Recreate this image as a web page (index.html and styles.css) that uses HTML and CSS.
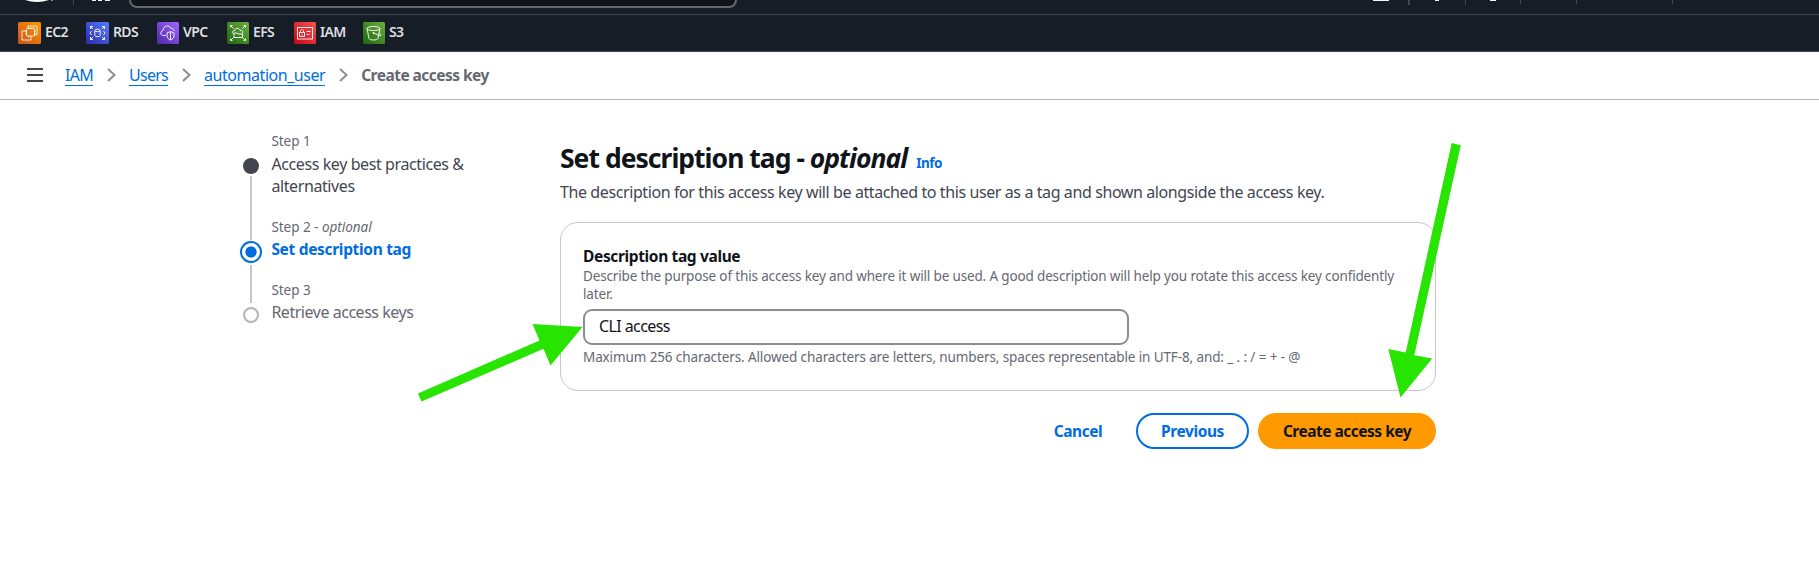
FILE: index.html
```html
<!DOCTYPE html>
<html lang="en">
<head>
<meta charset="utf-8">
<title>Create access key | IAM</title>
<link rel="stylesheet" href="styles.css">
</head>
<body>
<header class="topnav">
  <svg class="nav-left" width="129" height="14" viewBox="0 0 129 14">
    <path d="M25 0Q37 4 49 0Z" fill="#fff"/><path d="M51 0h2v1h-2z" fill="#8c8c94"/>
    <path d="M73 0h1v5h-1z" fill="#424650"/>
    <path d="M92 0h4v1h-4zM98 0h4v1h-4zM105 0h5v1h-5z" fill="#f3f3f7"/>
  </svg>
  <div class="search"></div>
  <svg class="nav-right" width="479" height="14" viewBox="0 0 479 14">
    <path d="M33 0h16v1H33zM95 0h4v1h-4zM150 0h6v1h-6z" fill="#f3f3f7"/>
    <path d="M68 0h2v5h-2zM125 0h1v5h-1zM180 0h1v4h-1zM236 0h1v4h-1zM332 0h1v4h-1z" fill="#424650"/>
  </svg>
</header>
<nav class="favorites">
  <a class="fav"><svg width="23" height="22" viewBox="0 0 23 22"><defs><linearGradient id="go" x1="0" y1="1" x2="1" y2="0"><stop stop-color="#c8511b"/><stop offset="1" stop-color="#f90"/></linearGradient></defs><rect width="23" height="22" rx="1.5" fill="url(#go)"/><g fill="none" stroke="#fff" stroke-width=".9"><rect x="8.5" y="6.500" width="8" height="7.500" rx="1"/><path d="M10.500 6.500V5M13 6.500V5M15.500 6.500V5M16.500 9H18M16.500 11.500H18M7 9h1.500M7 11.500h1.500M10.500 14v1.500M13 14v1.500M8 9H4v9h9v-3M10 6V4h9v9h-2.500" stroke-width=".8"/></g></svg><span>EC2</span></a>
  <a class="fav"><svg width="23" height="22" viewBox="0 0 23 22"><defs><linearGradient id="gb" x1="0" y1="1" x2="1" y2="0"><stop stop-color="#2e27ad"/><stop offset="1" stop-color="#527fff"/></linearGradient></defs><rect width="23" height="22" rx="1.500" fill="url(#gb)"/><g fill="none" stroke="#fff" stroke-width=".9"><path d="M4.500 7V4.500H7M4.500 4.500L7 7M16 4.500h2.500V7M18.500 4.500L16 7M4.500 15v2.500H7M4.500 17.500L7 15M16 17.500h2.500V15M18.500 17.500L16 15M5.500 9L4 11l1.500 2M17.500 9L19 11l-1.500 2"/><ellipse cx="11.500" cy="8.500" rx="2.700" ry="1.200"/><path d="M8.800 8.500v5c0 1.600 5.400 1.600 5.400 0v-5"/></g></svg><span>RDS</span></a>
  <a class="fav"><svg width="22" height="22" viewBox="0 0 22 22"><defs><linearGradient id="gp" x1="0" y1="1" x2="1" y2="0"><stop stop-color="#4d27a8"/><stop offset="1" stop-color="#a166ff"/></linearGradient></defs><rect width="22" height="22" rx="1.500" fill="url(#gp)"/><g fill="none" stroke="#fff" stroke-width=".9"><path d="M9 13.500H6.500C3 13.500 3 9 6 8.500c0-5 6.500-6 8-2 2-.5 3 .5 3 2.500"/><path d="M13.500 9.500l3.500 1.500v2.500c0 2.500-1.500 3.500-3.500 4.500-2-1-3.500-2-3.500-4.500V11zM13.500 9.500V18"/></g></svg><span>VPC</span></a>
  <a class="fav"><svg width="22" height="22" viewBox="0 0 22 22"><defs><linearGradient id="gg" x1="0" y1="1" x2="1" y2="0"><stop stop-color="#1b660f"/><stop offset="1" stop-color="#6cae3e"/></linearGradient></defs><rect width="22" height="22" rx="1.500" fill="url(#gg)"/><g fill="none" stroke="#fff" stroke-width=".9"><path d="M3.500 5.500V3.500H5.500M4 4l2.500 2.500M16.500 3.500h2V5.500M18 4l-2.500 2.500M3.500 16.500v2H5.500M4 18l2.500-2.500M16.500 18.500h2V16.500M18 18l-2.500-2.500"/><path d="M7 11.500H6c-1.500-2 .5-3 1.500-2.500 0-3.500 5-3.500 5.500-.5 2-.5 3.500.5 2.500 3M7 15.500v-4.500h3l1 1h4.500v3.500z"/></g></svg><span>EFS</span></a>
  <a class="fav"><svg width="22" height="22" viewBox="0 0 22 22"><defs><linearGradient id="gr" x1="0" y1="1" x2="1" y2="0"><stop stop-color="#bd0816"/><stop offset="1" stop-color="#ff5252"/></linearGradient></defs><rect width="22" height="22" rx="1.500" fill="url(#gr)"/><g fill="none" stroke="#fff" stroke-width=".9"><rect x="3.500" y="5.500" width="15" height="11.500"/><rect x="5.500" y="10.500" width="5" height="4"/><path d="M6.500 10.500V9c0-2 3-2 3 0v1.500M8 12v1.500M12.500 9.500h4M12.500 12.500h3"/></g></svg><span>IAM</span></a>
  <a class="fav"><svg width="22" height="22" viewBox="0 0 22 22"><rect width="22" height="22" rx="1.500" fill="url(#gg)"/><g fill="none" stroke="#fff" stroke-width=".9"><ellipse cx="10.500" cy="6.500" rx="6.500" ry="2"/><path d="M4 6.500L6 16.500c1 2 8 2 9 0L17 6.500M10.500 11l6 2.500c2 .5 2-1 0-2.500"/></g><circle cx="10.500" cy="11" r=".9" fill="#fff"/></svg><span>S3</span></a>
</nav>
<div class="crumbs">
  <svg class="menu" width="16" height="14" viewBox="0 0 16 14"><path d="M0 1h16M0 7h16M0 13h16" stroke="#424650" stroke-width="2"/></svg>
  <a class="c1">IAM</a>
  <svg class="sep" width="9" height="14" viewBox="0 0 9 14"><path d="M1 1l6.500 6L1 13"/></svg>
  <a class="c2">Users</a>
  <svg class="sep" width="9" height="14" viewBox="0 0 9 14"><path d="M1 1l6.500 6L1 13"/></svg>
  <a class="c3">automation_user</a>
  <svg class="sep" width="9" height="14" viewBox="0 0 9 14"><path d="M1 1l6.500 6L1 13"/></svg>
  <b class="c4">Create access key</b>
</div>
<div class="page">
  <ol class="steps">
    <li class="step">
      <div class="rail"><i class="dot done"></i><i class="line"></i></div>
      <div><p class="num">Step 1</p><p class="name done-name">Access key best practices &amp;<br>alternatives</p></div>
    </li>
    <li class="step current">
      <div class="rail"><i class="dot active"></i><i class="line"></i></div>
      <div><p class="num">Step 2 - <em>optional</em></p><p class="name active-name">Set description tag</p></div>
    </li>
    <li class="step">
      <div class="rail"><i class="dot"></i></div>
      <div><p class="num">Step 3</p><p class="name">Retrieve access keys</p></div>
    </li>
  </ol>
  <main class="content">
    <h1><span class="title">Set description tag - <em>optional</em></span><a class="info">Info</a></h1>
    <p class="lead">The description for this access key will be attached to this user as a tag and shown alongside the access key.</p>
    <section class="card">
      <p class="label">Description tag value</p>
      <p class="hint">Describe the purpose of this access key and where it will be used. A good description will help you rotate this access key confidently later.</p>
      <div class="input">CLI access</div>
      <p class="hint constraint">Maximum 256 characters. Allowed characters are letters, numbers, spaces representable in UTF-8, and: _ . : / = + - @</p>
    </section>
    <div class="actions">
      <button class="btn link">Cancel</button>
      <button class="btn normal">Previous</button>
      <button class="btn primary">Create access key</button>
    </div>
  </main>
</div>
<svg class="arrows" width="1819" height="565" viewBox="0 0 1819 565">
  <path d="M418 393.500L421.500 401.500L543.500 348.800L550.500 365.500L582.500 327L532.500 324L539.500 340.500Z"/>
  <path d="M1451.700 143L1460.800 145.200L1414.300 355.200L1432.200 358.500L1400.500 397.500L1388.300 349L1405.700 352.500Z"/>
</svg>
</body>
</html>
```
FILE: styles.css
```css
* { box-sizing: border-box; }
body, p, h1, ol { margin: 0; padding: 0; }
body {
  height: 565px;
  overflow: hidden;
  background: #fff;
  color: #0f141a;
  font: 16px/22px "Noto Sans", "Open Sans", sans-serif;
  letter-spacing: -0.4px;
}
svg { flex: none; }
.topnav {
  display: flex;
  height: 15px;
  background: #161d26;
  border-bottom: 1px solid #424650;
}
.search {
  width: 608px;
  height: 8px;
  background: #0f141a;
  border: 2px solid #656871;
  border-top: 0;
  border-radius: 0 0 9px 9px;
}
.nav-right { margin-left: auto; }
.favorites {
  display: grid;
  grid-template-columns: 68px 71px 70px 67px 69px 60px;
  align-items: center;
  height: 37px;
  padding-left: 18px;
  background: #161d26;
  border-bottom: 1px solid #424650;
}
.fav {
  display: flex;
  align-items: center;
  gap: 4px;
  height: 22px;
  color: #dedee3;
  font-size: 14px;
  line-height: 20px;
  font-weight: 600;
  letter-spacing: -0.65px;
}
.fav span { height: 22px; }
.crumbs {
  display: flex;
  align-items: center;
  height: 48px;
  padding: 0 0 2px 27px;
  border-bottom: 1px solid #b4b4bb;
}
.crumbs a {
  height: 22px;
  color: #006ce0;
  border-bottom: 1px solid #006ce0;
}
.menu { margin-right: 22px; }
.c1 { letter-spacing: -0.75px; }
.c2 { letter-spacing: -0.7px; }
.c3 { letter-spacing: -0.46px; }
.sep {
  margin: 0 13px 0 14px;
  fill: none;
  stroke: #8c8c94;
  stroke-width: 2;
}
.c4 { color: #656871; font-size: 15.5px; letter-spacing: -0.53px; }
.page { display: flex; padding: 32px 0 0 240px; }
.steps { width: 320px; list-style: none; }
.step { display: grid; grid-template-columns: 31.4px 1fr; height: 86px; color: #656871; }
.step.current { height: 63px; }
.rail { display: flex; flex-direction: column; align-items: center; width: 22px; padding-top: 26px; }
.dot { flex: none; width: 16px; height: 16px; border: 2px solid #b4b4bb; border-radius: 50%; }
.done { background: #424650; border-color: #424650; }
.active { width: 22px; height: 22px; margin-top: -3.5px; border-color: #006ce0; background: radial-gradient(circle, #006ce0 5.2px, #fff 6px); }
.line { flex: 1; width: 2px; margin: 2px 0 -22px; background: #c6c6cd; }
.num { height: 21px; font-size: 13.5px; line-height: 18px; letter-spacing: -0.03px; }
.step + .step .name { margin-top: -1px; }
.step:last-child .name { letter-spacing: -0.47px; }
.step:last-child .rail { padding-top: 25.5px; }
.done-name { color: #424650; }
.active-name { color: #006ce0; font-size: 15.5px; font-weight: 700; letter-spacing: -0.32px; }
.content { width: 876px; padding-top: 9px; }
h1 { display: flex; align-items: baseline; height: 40px; font-size: 26.5px; line-height: 34px; letter-spacing: -0.98px; }
.info { margin-left: 9px; color: #006ce0; font-size: 13.5px; letter-spacing: -0.5px; }
.lead { height: 41px; color: #424650; white-space: nowrap; letter-spacing: -0.4px; }
.card { height: 169px; padding: 22px 22px; border: 1px solid #c6c6cd; border-radius: 18px; }
.label { font-size: 15.5px; font-weight: 700; letter-spacing: -0.36px; }
.hint { width: 830px; color: #656871; font-size: 13.5px; line-height: 18px; letter-spacing: -0.15px; }
.constraint { letter-spacing: -0.112px; }
.input { width: 546px; height: 36px; margin: 6px 0 3px; padding-left: 14px; border: 2px solid #8c8c94; border-radius: 9px; line-height: 31px; letter-spacing: -0.6px; }
.actions { display: flex; justify-content: flex-end; margin-top: 22px; }
.btn { height: 36px; padding: 0 0 1px; border: 2px solid transparent; border-radius: 18px; background: none; color: #006ce0; font: 700 15.5px/30px "Noto Sans", sans-serif; letter-spacing: -0.42px; }
.link { width: 98px; margin-right: 9px; }
.normal { width: 113px; margin-right: 9px; border-color: #006ce0; }
.primary { width: 178px; background: #f90; color: #0f141a; letter-spacing: -0.5px; }
.arrows { position: absolute; left: 0; top: 0; fill: #27e500; pointer-events: none; }
```
